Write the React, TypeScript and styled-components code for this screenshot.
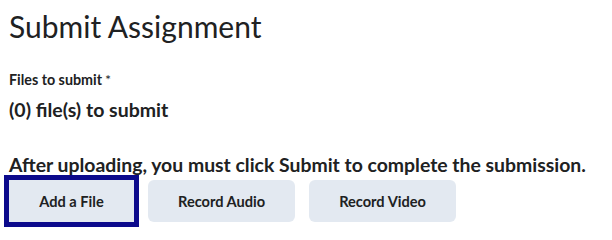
import styled, { createGlobalStyle } from 'styled-components';

const GlobalStyle = createGlobalStyle`
  html, body {
    margin: 0;
    padding: 0;
    background: #ffffff;
  }
  body {
    font-family: Lato, "Noto Sans", sans-serif;
    color: #202122;
  }
`;

const Page = styled.div`
  padding: 8px 9px;
`;

const Title = styled.h1`
  font-size: 30px;
  font-weight: 400;
  line-height: 36px;
  margin: 0 0 27px;
`;

const FieldLabel = styled.div`
  font-size: 14.3px;
  font-weight: 700;
  line-height: 18px;
  margin-bottom: 9px;

  span {
    font-weight: 400;
    margin-left: 3px;
  }
`;

const FileCount = styled.div`
  font-size: 19.5px;
  font-weight: 700;
  line-height: 24px;
  margin-bottom: 31px;
`;

const Notice = styled.p`
  font-size: 19.4px;
  font-weight: 700;
  line-height: 24px;
  white-space: nowrap;
  margin: 0 0 3px;
`;

const ButtonRow = styled.div`
  display: flex;
  gap: 14px;
`;

const Button = styled.button<{ $focused?: boolean }>`
  height: 42px;
  min-width: 125px;
  padding: 0 30px;
  font-family: Lato, "Noto Sans", sans-serif;
  font-size: 14.6px;
  font-weight: 700;
  color: #202122;
  background: #e3e9f1;
  border: none;
  cursor: pointer;
  outline: ${({ $focused }) => ($focused ? '5px solid #0c0a8c' : 'none')};
  outline-offset: 0;
  border-radius: ${({ $focused }) => ($focused ? '0' : '6px')};
`;

export default function App() {
  return (
    <>
      <GlobalStyle />
      <Page>
        <Title>Submit Assignment</Title>
        <FieldLabel>
          Files to submit<span>*</span>
        </FieldLabel>
        <FileCount>(0) file(s) to submit</FileCount>
        <Notice>After uploading, you must click Submit to complete the submission.</Notice>
        <ButtonRow>
          <Button $focused>Add a File</Button>
          <Button>Record Audio</Button>
          <Button>Record Video</Button>
        </ButtonRow>
      </Page>
    </>
  );
}
